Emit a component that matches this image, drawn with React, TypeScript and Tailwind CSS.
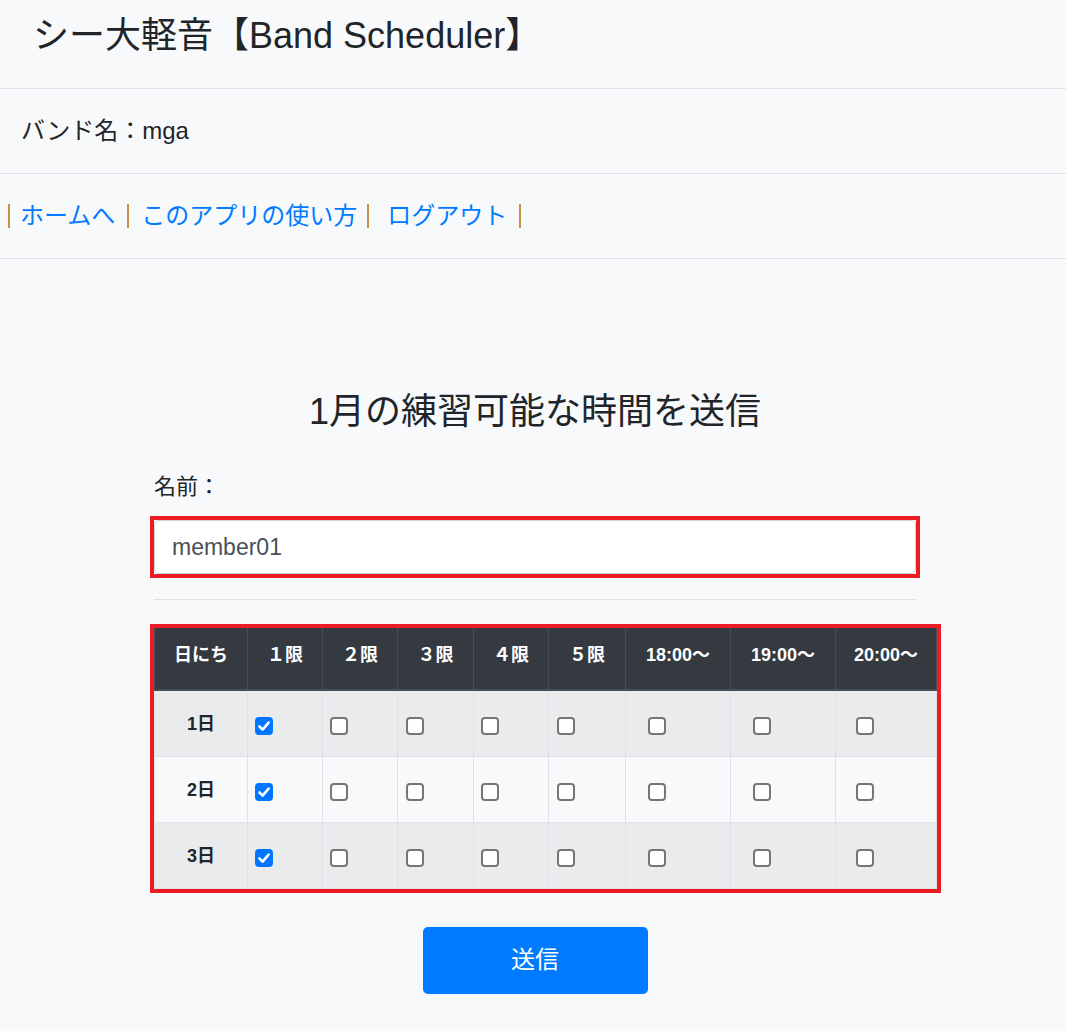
import { useState } from "react";

const slots = ["１限", "２限", "３限", "４限", "５限", "18:00〜", "19:00〜", "20:00〜"];
const days = ["1日", "2日", "3日"];

function Bar() {
  return <span className="inline-block h-[24px] w-[2px] bg-[#c8913f]" />;
}

function Check({ checked, onToggle }: { checked: boolean; onToggle: () => void }) {
  return (
    <span className="relative mt-[5px] inline-block h-[18px] w-[18px]">
      <input
        type="checkbox"
        checked={checked}
        onChange={onToggle}
        className="block h-[18px] w-[18px] cursor-pointer appearance-none rounded-[4px] border-2 border-[#767676] bg-white checked:border-[#0075ff] checked:bg-[#0075ff]"
      />
      {checked && (
        <svg
          viewBox="0 0 18 18"
          className="pointer-events-none absolute inset-0 h-[18px] w-[18px]"
          fill="none"
          stroke="#fff"
          strokeWidth="2.6"
          strokeLinecap="round"
          strokeLinejoin="round"
        >
          <path d="M4.5 9.5 7.6 12.6 13.6 5.6" />
        </svg>
      )}
    </span>
  );
}

export default function App() {
  const [grid, setGrid] = useState<boolean[][]>(
    days.map(() => slots.map((_, i) => i === 0))
  );

  const toggle = (r: number, c: number) =>
    setGrid((g) => g.map((row, ri) => (ri === r ? row.map((v, ci) => (ci === c ? !v : v)) : row)));

  return (
    <div className="min-h-screen bg-[#f8f9fa] font-['Liberation_Sans','Noto_Sans_CJK_JP',sans-serif] text-[#212529]">
      <header className="h-[89px] border-b border-[#dee2e6] pl-[33px] pt-[14px]">
        <h1 className="text-[36px] leading-[43px] font-normal">シー大軽音【Band Scheduler】</h1>
      </header>

      <div className="flex h-[85px] items-center border-b border-[#dee2e6] pl-[21px]">
        <p className="text-[24px] leading-[32px]">バンド名：mga</p>
      </div>

      <nav className="flex h-[85px] items-center border-b border-[#dee2e6] pl-[8px] text-[24px] leading-[32px]">
        <Bar />
        <a href="#" className="ml-[10px] mr-[12px] text-[#007bff]">ホームへ</a>
        <Bar />
        <a href="#" className="ml-[12px] mr-[10px] text-[#007bff]">このアプリの使い方</a>
        <Bar />
        <a href="#" className="ml-[18px] mr-[12px] text-[#007bff]">ログアウト</a>
        <Bar />
      </nav>

      <main className="pb-[40px] pl-[4px] pt-[131px]">
        <div className="mx-auto w-[762px]">
          <h2 className="text-center text-[36px] leading-[43px] font-normal">1月の練習可能な時間を送信</h2>

          <label className="mt-[37px] block text-[22px] leading-[33px]">名前：</label>
          <div className="-mx-[4px] mt-[13px] border-4 border-[#ed1c24]">
            <input
              type="text"
              defaultValue="member01"
              className="block h-[54px] w-full rounded-[5px] border border-[#ced4da] bg-white px-[17px] text-[23px] text-[#495057] outline-none"
            />
          </div>

          <hr className="mt-[21px] border-t border-[#dfe0e1]" />

          <table className="mt-[28px] w-[782px] table-fixed border-collapse outline-4 outline-[#ed1c24]">
            <colgroup>
              <col className="w-[93px]" />
              <col className="w-[75px]" />
              <col className="w-[75px]" />
              <col className="w-[76px]" />
              <col className="w-[75px]" />
              <col className="w-[77px]" />
              <col className="w-[105px]" />
              <col className="w-[105px]" />
              <col className="w-[101px]" />
            </colgroup>
            <thead>
              <tr className="bg-[#343a40] text-white">
                <th className="h-[62px] border-x border-b-2 border-[#454d55] pb-[6px] text-center align-middle text-[18px] font-bold">
                  日にち
                </th>
                {slots.map((s) => (
                  <th
                    key={s}
                    className="h-[62px] border-x border-b-2 border-[#454d55] pb-[6px] text-center align-middle text-[18px] font-bold"
                  >
                    {s}
                  </th>
                ))}
              </tr>
            </thead>
            <tbody>
              {days.map((d, r) => (
                <tr key={d} className={r % 2 === 0 ? "bg-[#eaebed]" : "bg-[#f8f9fa]"}>
                  <td className="h-[66px] border border-[#dee2e6] pt-[3px] text-center align-middle text-[18px] font-bold">
                    {d}
                  </td>
                  {slots.map((s, c) => (
                    <td key={s} className="h-[66px] border border-[#dee2e6] p-0 align-middle">
                      <div className="mx-auto flex w-[60px] items-center">
                        <Check checked={grid[r][c]} onToggle={() => toggle(r, c)} />
                      </div>
                    </td>
                  ))}
                </tr>
              ))}
            </tbody>
          </table>

          <button
            type="button"
            className="mx-auto mt-[38px] block h-[67px] w-[225px] rounded-[5px] bg-[#007bff] text-[24px] text-white"
          >
            送信
          </button>
        </div>
      </main>
    </div>
  );
}
